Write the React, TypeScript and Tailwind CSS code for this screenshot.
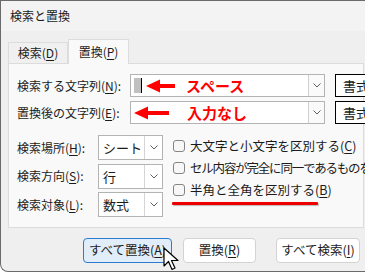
import React from 'react'

const jp = { fontFamily: '"Noto Sans CJK JP", "Noto Sans", sans-serif' }

function U({ children }: { children: React.ReactNode }) {
  return <span className="underline underline-offset-2 decoration-[1px]">{children}</span>
}

function Chevron() {
  return (
    <svg width="8" height="5" viewBox="0 0 8 5" className="text-[#5f5f5f]">
      <path d="M0.5 0.5 L4 4 L7.5 0.5" fill="none" stroke="currentColor" strokeWidth="1" />
    </svg>
  )
}

function RedArrow({ w }: { w: number }) {
  return (
    <svg width={w} height="14" viewBox={`0 0 ${w} 14`}>
      <polygon points={`0,7 14,0.5 14,5 ${w},5 ${w},9 14,9 14,13.5`} fill="#ff0000" />
    </svg>
  )
}

function Combo({ children }: { children?: React.ReactNode }) {
  return (
    <div className="flex h-[23px] w-[195px] shrink-0 border border-[#b3b3b3] bg-white">
      <div className="flex flex-1 items-center pl-[3px] gap-[2px]">{children}</div>
      <div className="flex w-[16px] items-center justify-center border-l border-[#cfcfcf] bg-[#fafafa]">
        <Chevron />
      </div>
    </div>
  )
}

function Select({ value }: { value: string }) {
  return (
    <div className="flex h-[25px] w-[65px] shrink-0 border border-[#b3b3b3] bg-white">
      <div className="flex flex-1 items-center pl-[4px] text-[13px]">{value}</div>
      <div className="flex w-[18px] items-center justify-center border-l border-[#d5d5d5]">
        <Chevron />
      </div>
    </div>
  )
}

function Check({ children, tight }: { children: React.ReactNode; tight?: boolean }) {
  return (
    <div className="flex h-[22px] items-center">
      <div className="h-[12px] w-[12px] shrink-0 rounded-[3px] border border-[#858585] bg-[#f7f7f7]" />
      <span className={tight ? 'ml-[5px] whitespace-nowrap text-[12.5px] tracking-[-1.2px]' : 'ml-[5px] whitespace-nowrap text-[12.5px]'}>
        {children}
      </span>
    </div>
  )
}

export default function App() {
  return (
    <div className="h-[273px] w-[365px] overflow-hidden bg-white text-[#1b1b1b]" style={jp}>
      <div className="relative flex h-[272px] w-[375px] flex-col rounded-bl-[8px] border-b border-l border-t border-[#6a6a6a] bg-[#efefef] leading-none">
        <div className="flex h-[30px] items-center bg-[#f3f3f3] pl-[9px] text-[12px]">検索と置換</div>

        <div className="flex h-[32px] items-end pl-[7px]">
          <div className="flex h-[21px] w-[60px] items-center justify-center border border-b-0 border-[#dcdcdc] bg-[#f0f0f0] text-[12px]">
            検索(<U>D</U>)
          </div>
          <div className="relative top-[1px] flex h-[25px] w-[61px] items-center justify-center border border-b-0 border-[#dcdcdc] bg-[#f9f9f9] text-[12px]">
            置換(<U>P</U>)
          </div>
        </div>

        <div className="ml-[7px] h-[165px] w-[356px] border border-[#dcdcdc] bg-[#f9f9f9] pl-[8px] pt-[10px] text-[12px]">
          <div className="flex h-[23px] items-center">
            <span className="w-[113px] shrink-0">検索する文字列(<U>N</U>):</span>
            <Combo>
              <span className="h-[15px] w-[7px] bg-[#c0c0c0]" />
              <span className="-ml-[2px] h-[15px] w-[1px] bg-black" />
              <span className="ml-[2px] flex"><RedArrow w={29} /></span>
              <span className="ml-[9px] text-[15px] font-bold text-[#ff0000]">スペース</span>
            </Combo>
            <div className="ml-[10px] flex h-[23px] w-[60px] shrink-0 items-center border border-black bg-white pl-[7px] text-[13px]">書式</div>
          </div>

          <div className="mt-[4px] flex h-[23px] items-center">
            <span className="w-[113px] shrink-0">置換後の文字列(<U>E</U>):</span>
            <Combo>
              <span className="flex"><RedArrow w={35} /></span>
              <span className="ml-[16px] text-[15px] font-bold text-[#ff0000]">入力なし</span>
            </Combo>
            <div className="ml-[10px] flex h-[23px] w-[60px] shrink-0 items-center border border-black bg-white pl-[7px] text-[13px]">書式</div>
          </div>

          <div className="mt-[11px] flex">
            <div className="flex w-[156px] shrink-0 flex-col gap-[3.5px]">
              <div className="flex items-center">
                <span className="w-[81px] shrink-0">検索場所(<U>H</U>):</span>
                <Select value="シート" />
              </div>
              <div className="flex items-center">
                <span className="w-[81px] shrink-0">検索方向(<U>S</U>):</span>
                <Select value="行" />
              </div>
              <div className="flex items-center">
                <span className="w-[81px] shrink-0">検索対象(<U>L</U>):</span>
                <Select value="数式" />
              </div>
            </div>
            <div className="flex shrink-0 flex-col">
              <Check>大文字と小文字を区別する(<U>C</U>)</Check>
              <Check tight>セル内容が完全に同一であるものを検索する</Check>
              <Check>半角と全角を区別する(<U>B</U>)</Check>
              <div className="mt-[1px] -ml-[1px] h-[3px] w-[146px] rounded-[1px] bg-[#ee0000] shadow-[1px_1px_1px_rgba(0,0,0,0.25)]" />
            </div>
          </div>
        </div>

        <div className="mt-[10px] flex pl-[82px] text-[12.5px]">
          <div className="flex h-[25px] w-[89px] items-center justify-center rounded-[4px] border border-[#2c7bd0] bg-[#e1edf8]">
            すべて置換(<U>A</U>)
          </div>
          <div className="ml-[11px] flex h-[25px] w-[73px] items-center justify-center rounded-[4px] border border-[#d3d3d3] bg-white">
            置換(<U>R</U>)
          </div>
          <div className="ml-[20px] flex h-[25px] w-[84px] items-center justify-center rounded-[4px] border border-[#d3d3d3] bg-white">
            すべて検索(<U>I</U>)
          </div>
        </div>

        <svg className="absolute left-[162px] top-[246px]" width="17" height="25" viewBox="0 0 17 25">
          <path d="M1 1 L1 19 L5.5 14.5 L9 22.5 L12 21 L8.5 13.5 L15 13.5 Z" fill="#fff" stroke="#000" strokeWidth="1.2" strokeLinejoin="round" />
        </svg>
      </div>
    </div>
  )
}
